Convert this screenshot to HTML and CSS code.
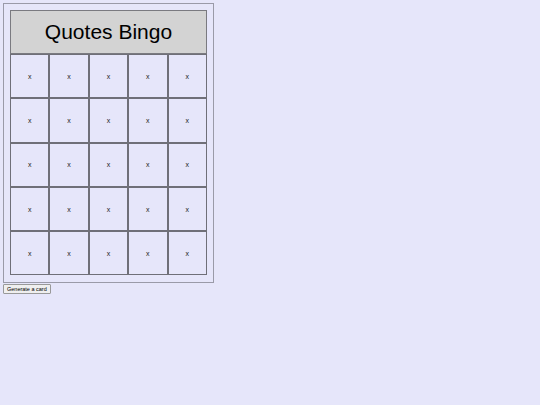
FILE: index.html
```html
<!DOCTYPE html>
<html lang="en">

<head>
    <meta charset="UTF-8">
    <meta name="viewport" content="width=device-width, initial-scale=1.0">
    <title>Quotes Bingo</title>
    <link rel="stylesheet" href="styles.css">
</head>

<body>
    <!-- Bingo Card -->
    <div class="card">
        <table class="bingo">
            <thead>
                <tr>
                    <th colspan="5">Quotes Bingo</th>
                </tr>
            </thead>
            <tbody id="bingo-body"></tbody>
        </table>
    </div>

    <button class="generate" id="generate">Generate a card</button>

    <script>
        // Build the empty 5x5 grid
        const body = document.getElementById('bingo-body');

        function buildCard() {
            body.innerHTML = '';
            for (let r = 0; r < 5; r++) {
                const row = document.createElement('tr');
                for (let c = 0; c < 5; c++) {
                    const cell = document.createElement('td');
                    cell.textContent = 'x';
                    row.appendChild(cell);
                }
                body.appendChild(row);
            }
        }

        buildCard();
        document.getElementById('generate').addEventListener('click', buildCard);
    </script>
</body>

</html>
```

FILE: styles.css
```css
/* Page */
body {
    margin: 3px;
    background: #e6e6fa;
    font-family: 'Liberation Sans', Arial, sans-serif;
}

/* Card Container */
.card {
    display: inline-block;
    vertical-align: top;
    border: 1px solid #9a9aa8;
    padding: 6px 6px 7px;
}

/* Bingo Table */
.bingo {
    border-spacing: 0;
    width: 197px;
    table-layout: fixed;
}

.bingo th {
    height: 42px;
    padding: 0;
    background: #d3d3d3;
    border: 1px solid #7a7a80;
    font-size: 21px;
    font-weight: normal;
    color: #000;
}

.bingo td {
    height: 42.3px;
    padding: 0;
    border: 1px solid #6f6f78;
    text-align: center;
    font-size: 7px;
    color: #222;
}

/* Generate Button */
.generate {
    display: block;
    margin: 1px 0 0;
    padding: 1px 3px;
    font-family: 'Liberation Sans', Arial, sans-serif;
    font-size: 5.5px;
    background: #efefef;
    border: 1px solid #999;
    border-radius: 1px;
    color: #000;
}
```
